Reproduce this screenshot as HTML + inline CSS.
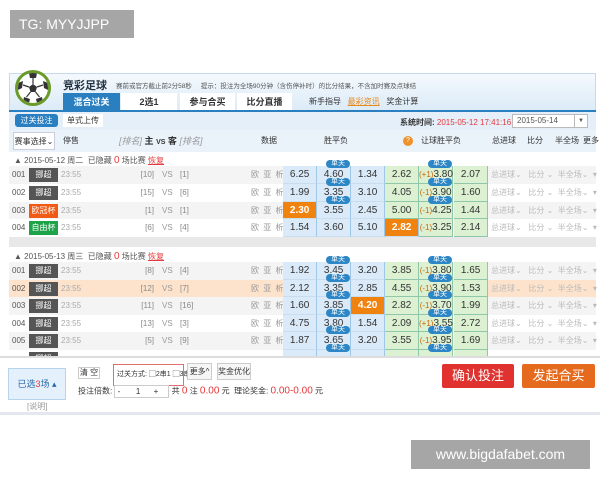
<!DOCTYPE html><html><head><meta charset="utf-8"><style>
*{margin:0;padding:0;box-sizing:border-box}
body{width:600px;height:480px;background:#fff;position:relative;overflow:hidden;font-family:"Liberation Sans","Noto Sans CJK SC",sans-serif;font-size:8px;color:#333;white-space:nowrap}
.a{position:absolute}
.tg{left:10px;top:10px;width:124px;height:28px;background:#a6a6a6;color:#fff;font-size:14px;line-height:28px;padding-left:9px}
.wm{left:411px;top:440px;width:179px;height:29px;background:#a6a6a6;color:#fff;font-size:14px;line-height:29px;text-align:center}
.hdr{left:9px;top:73px;width:587px;height:38px;background:linear-gradient(#f4f9fd,#dcebf7);border:1px solid #c4dbee}
.tab{top:93px;height:18px;background:#fff;text-align:center;font-size:9px;line-height:18px;font-weight:bold;color:#333}
.row{position:absolute;left:9px;width:587px;height:17.6px;line-height:17.6px}
.row span{position:absolute;top:0}
.n{left:3px;color:#555}
.lg{left:20px;top:2px!important;width:29px;height:14px;line-height:14px;text-align:center;color:#fff;background:#555}
.t{left:52px;color:#aaa}
.r1{left:100px;width:45px;text-align:right;color:#888}
.vs{left:153px;color:#999}
.r2{left:171px;color:#888}
.d{left:242px;color:#999;letter-spacing:1px}
.o{width:34.3px;height:17.6px;text-align:center;font-size:10px;color:#333;border-right:1px solid #9ec6e6;border-bottom:1px solid #c8ddee}
.b{background:#dbeaf8}.g{background:#dcf0d2;border-color:#8fc7ab}
.or{background:#f0830f;color:#fff;font-weight:bold}
.sel{color:#bbb;font-size:8px}
.dj{left:317px;top:-6px!important;width:24px;height:8px;line-height:8px;background:#2d86c6;color:#fff;font-size:7px;text-align:center;border-radius:4px}
.date{position:absolute;left:14px;font-size:8px;color:#555}
.date b{color:#e4393c;font-weight:normal;font-size:10px}
.date u{color:#e4393c}
</style></head><body>
<div class="a tg">TG: MYYJJPP</div>
<div class="a hdr"></div>
<div class="a" style="left:15px;top:70px;width:36px;height:36px;border-radius:50%;border:3px solid #6a9a2a;background:#fff;overflow:hidden"><svg width="30" height="30" viewBox="0 0 30 30"><polygon points="15,11 19,14 17.5,19 12.5,19 11,14" fill="#333"/><path d="M15 11V5M19 14l6-2M17.5 19l4 5M12.5 19l-4 5M11 14l-6-2" stroke="#333" stroke-width="1.2"/><polygon points="11,0 19,0 18,5 12,5" fill="#333"/><polygon points="25,8 30,10 30,17 26,15" fill="#333"/><polygon points="5,8 0,10 0,17 4,15" fill="#333"/><polygon points="6,24 12,26 11,30 5,30" fill="#333"/><polygon points="24,24 18,26 19,30 25,30" fill="#333"/></svg></div>
<div class="a" style="left:63px;top:77px;font-size:11px;font-weight:bold;color:#234">竞彩足球</div>
<div class="a" style="left:116px;top:80px;font-size:6.5px;color:#555">赛前或官方截止前2分58秒 &nbsp; &nbsp; 提示：投注为全场90分钟（含伤停补时）的比分结果，不含加时赛及点球结</div>
<div class="a tab" style="left:63px;width:57px;background:#2a7fc0;color:#fff">混合过关</div>
<div class="a tab" style="left:121px;width:56px">2选1</div>
<div class="a tab" style="left:180px;width:55px">参与合买</div>
<div class="a tab" style="left:237px;width:55px">比分直播</div>
<div class="a" style="left:309px;top:96px;font-size:8px;color:#333">新手指导 &nbsp; <u style="color:#e58a1c">最彩资讯</u> &nbsp; 奖金计算</div>
<div class="a" style="left:9px;top:110px;width:587px;height:2px;background:#2a7fc0"></div>
<div class="a" style="left:9px;top:112px;width:587px;height:18px;background:#e4eff9"></div>
<div class="a" style="left:15px;top:114px;width:43px;height:13px;background:#2a7fc0;color:#fff;text-align:center;line-height:13px;border-radius:3px">过关投注</div>
<div class="a" style="left:63px;top:114px;width:40px;height:13px;background:#fff;text-align:center;line-height:13px">单式上传</div>
<div class="a" style="left:400px;top:117px;font-weight:bold">系统时间: <span style="color:#e4393c;font-weight:normal">2015-05-12 17:41:16</span></div>
<div class="a" style="left:512px;top:114px;width:76px;height:14px;background:#fff;border:1px solid #bbb;line-height:12px;padding-left:4px;color:#555">2015-05-14<span style="position:absolute;right:0;top:0;width:13px;height:12px;border-left:1px solid #bbb;text-align:center;font-size:6px">▼</span></div>
<div class="a" style="left:9px;top:130px;width:587px;height:22px;background:#eaf2fa;line-height:22px;color:#333">
<span class="a" style="left:4px;top:2px;width:42px;height:18px;line-height:18px;background:#fff;border:1px solid #ccd;text-align:center">赛事选择⌄</span>
<span class="a" style="left:54px">停售</span>
<span class="a" style="left:110px;font-size:9px"><i style="color:#999">[排名]</i> <b>主</b> <b style="font-size:7px">VS</b> <b>客</b> <i style="color:#999">[排名]</i></span>
<span class="a" style="left:252px">数据</span>
<span class="a" style="left:315px">胜平负</span>
<span class="a" style="left:394px;top:6px;width:10px;height:10px;border-radius:50%;background:#f0912a;color:#fff;line-height:10px;text-align:center;font-size:7px">?</span>
<span class="a" style="left:412px">让球胜平负</span>
<span class="a" style="left:483px">总进球</span>
<span class="a" style="left:518px">比分</span>
<span class="a" style="left:546px">半全场</span>
<span class="a" style="left:574px">更多</span></div>

<div class="date" style="top:155px">▲ 2015-05-12 周二 &nbsp;已隐藏 <b>0</b> 场比赛 <u>恢复</u></div>
<div style="position:absolute;left:9px;top:237px;width:587px;height:10px;background:#e8e8e8"></div>
<div class="date" style="top:251px">▲ 2015-05-13 周三 &nbsp;已隐藏 <b>0</b> 场比赛 <u>恢复</u></div>

<div class="row" style="top:166px;background:#f4f4f4"><span class="n">001</span><span class="lg">挪超</span><span class="t">23:55</span><span class="r1">[10]</span><span class="vs">VS</span><span class="r2">[1]</span><span class="d">欧 亚 析</span>
<span class="o b" style="left:274px">6.25</span><span class="o b" style="left:308px">4.60</span><span class="o b" style="left:342px">1.34</span><span class="o g" style="left:376px">2.62</span><span class="o g" style="left:410px"><i style="color:#c60;font-style:normal;font-size:8px">(+1)</i>3.80</span><span class="o g" style="left:445px">2.07</span><span class="sel" style="left:482px">总进球⌄ &nbsp; 比分 ⌄ &nbsp;半全场⌄ &nbsp;▾</span><span class="dj">单关</span><span class="dj" style="left:419px">单关</span></div>
<div class="row" style="top:184px;background:#fff"><span class="n">002</span><span class="lg">挪超</span><span class="t">23:55</span><span class="r1">[15]</span><span class="vs">VS</span><span class="r2">[6]</span><span class="d">欧 亚 析</span>
<span class="o b" style="left:274px">1.99</span><span class="o b" style="left:308px">3.35</span><span class="o b" style="left:342px">3.10</span><span class="o g" style="left:376px">4.05</span><span class="o g" style="left:410px"><i style="color:#c60;font-style:normal;font-size:8px">(-1)</i>3.90</span><span class="o g" style="left:445px">1.60</span><span class="sel" style="left:482px">总进球⌄ &nbsp; 比分 ⌄ &nbsp;半全场⌄ &nbsp;▾</span><span class="dj">单关</span><span class="dj" style="left:419px">单关</span></div>
<div class="row" style="top:201.5px;background:#f4f4f4"><span class="n">003</span><span class="lg" style="background:#f05a14">欧冠杯</span><span class="t">23:55</span><span class="r1">[1]</span><span class="vs">VS</span><span class="r2">[1]</span><span class="d">欧 亚 析</span>
<span class="o or" style="left:274px">2.30</span><span class="o b" style="left:308px">3.55</span><span class="o b" style="left:342px">2.45</span><span class="o g" style="left:376px">5.00</span><span class="o g" style="left:410px"><i style="color:#c60;font-style:normal;font-size:8px">(-1)</i>4.25</span><span class="o g" style="left:445px">1.44</span><span class="sel" style="left:482px">总进球⌄ &nbsp; 比分 ⌄ &nbsp;半全场⌄ &nbsp;▾</span><span class="dj">单关</span><span class="dj" style="left:419px">单关</span></div>
<div class="row" style="top:219px;background:#fff"><span class="n">004</span><span class="lg" style="background:#1ea24a">自由杯</span><span class="t">23:55</span><span class="r1">[6]</span><span class="vs">VS</span><span class="r2">[4]</span><span class="d">欧 亚 析</span>
<span class="o b" style="left:274px">1.54</span><span class="o b" style="left:308px">3.60</span><span class="o b" style="left:342px">5.10</span><span class="o or" style="left:376px">2.82</span><span class="o g" style="left:410px"><i style="color:#c60;font-style:normal;font-size:8px">(-1)</i>3.25</span><span class="o g" style="left:445px">2.14</span><span class="sel" style="left:482px">总进球⌄ &nbsp; 比分 ⌄ &nbsp;半全场⌄ &nbsp;▾</span></div>

<div class="row" style="top:262px;background:#f4f4f4"><span class="n">001</span><span class="lg">挪超</span><span class="t">23:55</span><span class="r1">[8]</span><span class="vs">VS</span><span class="r2">[4]</span><span class="d">欧 亚 析</span>
<span class="o b" style="left:274px">1.92</span><span class="o b" style="left:308px">3.45</span><span class="o b" style="left:342px">3.20</span><span class="o g" style="left:376px">3.85</span><span class="o g" style="left:410px"><i style="color:#c60;font-style:normal;font-size:8px">(-1)</i>3.80</span><span class="o g" style="left:445px">1.65</span><span class="sel" style="left:482px">总进球⌄ &nbsp; 比分 ⌄ &nbsp;半全场⌄ &nbsp;▾</span><span class="dj">单关</span><span class="dj" style="left:419px">单关</span></div>
<div class="row" style="top:279.5px;background:#fde3cc"><span class="n">002</span><span class="lg">挪超</span><span class="t">23:55</span><span class="r1">[12]</span><span class="vs">VS</span><span class="r2">[7]</span><span class="d">欧 亚 析</span>
<span class="o b" style="left:274px">2.12</span><span class="o b" style="left:308px">3.35</span><span class="o b" style="left:342px">2.85</span><span class="o g" style="left:376px">4.55</span><span class="o g" style="left:410px"><i style="color:#c60;font-style:normal;font-size:8px">(-1)</i>3.90</span><span class="o g" style="left:445px">1.53</span><span class="sel" style="left:482px">总进球⌄ &nbsp; 比分 ⌄ &nbsp;半全场⌄ &nbsp;▾</span><span class="dj">单关</span><span class="dj" style="left:419px">单关</span></div>
<div class="row" style="top:297px;background:#f4f4f4"><span class="n">003</span><span class="lg">挪超</span><span class="t">23:55</span><span class="r1">[11]</span><span class="vs">VS</span><span class="r2">[16]</span><span class="d">欧 亚 析</span>
<span class="o b" style="left:274px">1.60</span><span class="o b" style="left:308px">3.85</span><span class="o or" style="left:342px">4.20</span><span class="o g" style="left:376px">2.82</span><span class="o g" style="left:410px"><i style="color:#c60;font-style:normal;font-size:8px">(-1)</i>3.70</span><span class="o g" style="left:445px">1.99</span><span class="sel" style="left:482px">总进球⌄ &nbsp; 比分 ⌄ &nbsp;半全场⌄ &nbsp;▾</span><span class="dj">单关</span><span class="dj" style="left:419px">单关</span></div>
<div class="row" style="top:314.5px;background:#fff"><span class="n">004</span><span class="lg">挪超</span><span class="t">23:55</span><span class="r1">[13]</span><span class="vs">VS</span><span class="r2">[3]</span><span class="d">欧 亚 析</span>
<span class="o b" style="left:274px">4.75</span><span class="o b" style="left:308px">3.80</span><span class="o b" style="left:342px">1.54</span><span class="o g" style="left:376px">2.09</span><span class="o g" style="left:410px"><i style="color:#c60;font-style:normal;font-size:8px">(+1)</i>3.55</span><span class="o g" style="left:445px">2.72</span><span class="sel" style="left:482px">总进球⌄ &nbsp; 比分 ⌄ &nbsp;半全场⌄ &nbsp;▾</span><span class="dj">单关</span><span class="dj" style="left:419px">单关</span></div>
<div class="row" style="top:332px;background:#f4f4f4"><span class="n">005</span><span class="lg">挪超</span><span class="t">23:55</span><span class="r1">[5]</span><span class="vs">VS</span><span class="r2">[9]</span><span class="d">欧 亚 析</span>
<span class="o b" style="left:274px">1.87</span><span class="o b" style="left:308px">3.65</span><span class="o b" style="left:342px">3.20</span><span class="o g" style="left:376px">3.55</span><span class="o g" style="left:410px"><i style="color:#c60;font-style:normal;font-size:8px">(-1)</i>3.95</span><span class="o g" style="left:445px">1.69</span><span class="sel" style="left:482px">总进球⌄ &nbsp; 比分 ⌄ &nbsp;半全场⌄ &nbsp;▾</span><span class="dj">单关</span><span class="dj" style="left:419px">单关</span></div>
<div class="row" style="top:349.5px;background:#fff"><span class="lg" style="top:2px">挪超</span><span class="o b" style="left:274px"></span><span class="o b" style="left:308px"></span><span class="o b" style="left:342px"></span><span class="o g" style="left:376px"></span><span class="o g" style="left:410px"></span><span class="o g" style="left:445px"></span><span class="dj">单关</span><span class="dj" style="left:419px">单关</span></div>

<div class="a" style="left:0;top:356px;width:600px;height:56px;background:#fff;border-top:2px solid #ddd"></div>
<div class="a" style="left:8px;top:368px;width:58px;height:32px;background:#e4f0fb;border:1px solid #b8d4ec;text-align:center;line-height:30px;font-size:9px;color:#2a6aa8">已选<span style="color:#e4393c">3</span>场 ▴</div>
<div class="a" style="left:27px;top:401px;color:#999">[说明]</div>
<div class="a" style="left:78px;top:367px;width:22px;height:12px;border:1px solid #ccc;text-align:center;line-height:10px">清 空</div>
<div class="a" style="left:113px;top:364px;width:71px;height:22px;border:1px solid #e07070;line-height:20px;padding-left:3px;font-size:7px">过关方式: ▢2串1 ▢3串1</div>
<div class="a" style="left:187px;top:363px;width:25px;height:17px;border:1px solid #ccc;text-align:center;line-height:15px;background:#f6f6f6">更多^</div>
<div class="a" style="left:217px;top:363px;width:34px;height:17px;border:1px solid #ccc;text-align:center;line-height:15px;background:#f6f6f6">奖金优化</div>
<div class="a" style="left:78px;top:385px;line-height:12px">投注倍数: <span style="display:inline-block;border:1px solid #ccc;width:55px;height:13px;vertical-align:middle;font-size:8px;line-height:11px;background:#fff">&nbsp;- &nbsp; &nbsp; &nbsp; 1 &nbsp; &nbsp; &nbsp;+</span> 共 <b style="color:#e4393c;font-weight:normal;font-size:10px">0</b> 注 <b style="color:#e4393c;font-weight:normal;font-size:10px">0.00</b> 元 &nbsp;理论奖金: <b style="color:#e4393c;font-weight:normal;font-size:10px">0.00-0.00</b> 元</div>
<div class="a" style="left:442px;top:364px;width:72px;height:24px;background:#e0322e;color:#fff;font-size:13px;text-align:center;line-height:24px;border-radius:2px">确认投注</div>
<div class="a" style="left:522px;top:364px;width:73px;height:24px;background:#e66a1e;color:#fff;font-size:13px;text-align:center;line-height:24px;border-radius:2px">发起合买</div>
<div class="a" style="left:0;top:412px;width:600px;height:3px;background:#e4e8ee"></div>
<div class="a wm">www.bigdafabet.com</div>
</body></html>
